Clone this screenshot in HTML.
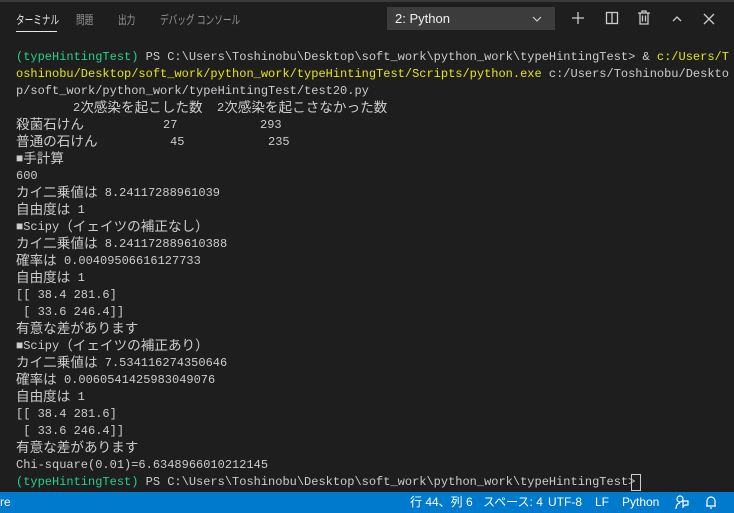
<!DOCTYPE html>
<html><head><meta charset="utf-8"><style>
body{margin:0;width:734px;height:513px;background:#1e1e1e;overflow:hidden;position:relative;font-family:"Liberation Mono","Noto Sans CJK JP",monospace;color:#cccccc}
.top{position:absolute;left:0;top:0;width:734px;height:2px;background:#3a3a3a}
.tab{position:absolute;top:11px;font:12px "Liberation Sans","Noto Sans CJK JP",sans-serif;color:#969696;transform:scaleX(0.72);transform-origin:0 0;white-space:nowrap}
.ul{position:absolute;left:16px;top:31px;width:41px;height:1px;background:#e7e7e7}
.dd{position:absolute;left:387px;top:7px;width:168px;height:23px;background:#3c3c3c;color:#f0f0f0;font:13px "Liberation Sans",sans-serif;line-height:23px;text-indent:8px}
.ln{position:absolute;left:16px;font-size:12px;line-height:17px;white-space:pre;height:17px}
.g{color:#23d18b}.y{color:#e5e510}
.j{font-family:"Noto Sans CJK JP",sans-serif;font-size:13.6px;letter-spacing:0;line-height:17px;display:inline-block;height:17px;vertical-align:top;overflow:visible;position:relative;top:-2px}
.sb{position:absolute;left:0;top:492px;width:734px;height:21px;background:#007acc;color:#fff;font:12px "Liberation Sans","Noto Sans CJK JP",sans-serif;line-height:21px}
.sb span{position:absolute;top:0;white-space:nowrap}
svg{position:absolute}
</style></head><body>
<div class="top"></div>
<div class="tab" style="left:16px;color:#e7e7e7">ターミナル</div>
<div class="tab" style="left:76px">問題</div>
<div class="tab" style="left:118px">出力</div>
<div class="tab" style="left:160px">デバッグ コンソール</div>
<div class="ul"></div>
<div class="dd">2: Python</div>
<svg style="left:530px;top:12px" width="14" height="14"><path d="M3 5l4 4 4-4" stroke="#ccc" fill="none" stroke-width="1.2"/></svg>
<svg style="left:571px;top:11px" width="14" height="14"><path d="M7 1v12M1 7h12" stroke="#ccc" stroke-width="1.3"/></svg>
<svg style="left:605px;top:11px" width="14" height="14"><rect x="1.5" y="1.5" width="11" height="11" stroke="#ccc" fill="none" stroke-width="1.3"/><path d="M7 1.5v11" stroke="#ccc" stroke-width="1.3"/></svg>
<svg style="left:637px;top:10px" width="14" height="15"><path d="M1 3h12M5 3V1h4v2M3 3v11h8V3M5.5 5.5v6M8.5 5.5v6" stroke="#ccc" fill="none" stroke-width="1.3"/></svg>
<svg style="left:670px;top:12px" width="14" height="14"><path d="M3 9l4-4 4 4" stroke="#ccc" fill="none" stroke-width="1.3"/></svg>
<svg style="left:702px;top:12px" width="14" height="14"><path d="M2 2l10 10M12 2L2 12" stroke="#ccc" stroke-width="1.3"/></svg>

<div class="ln" style="top:49px"><span class="g">(typeHintingTest)</span> PS C:\Users\Toshinobu\Desktop\soft_work\python_work\typeHintingTest&gt; &amp; <span class="y">c:/Users/T</span></div>
<div class="ln" style="top:66px"><span class="y">oshinobu/Desktop/soft_work/python_work/typeHintingTest/Scripts/python.exe</span> c:/Users/Toshinobu/Deskto</div>
<div class="ln" style="top:83px">p/soft_work/python_work/typeHintingTest/test20.py</div>
<div class="ln" style="top:100px;left:73px">2<span class="j">次感染を起こした数</span>  2<span class="j">次感染を起こさなかった数</span></div>
<div class="ln" style="top:117px"><span class="j">殺菌石けん</span></div><div class="ln" style="top:117px;left:163px">27</div><div class="ln" style="top:117px;left:260px">293</div>
<div class="ln" style="top:134px"><span class="j">普通の石けん</span></div><div class="ln" style="top:134px;left:170px">45</div><div class="ln" style="top:134px;left:268px">235</div>
<div class="ln" style="top:151px">■<span class="j">手計算</span></div>
<div class="ln" style="top:168px">600</div>
<div class="ln" style="top:185px"><span class="j">カイ二乗値は</span> 8.24117288961039</div>
<div class="ln" style="top:202px"><span class="j">自由度は</span> 1</div>
<div class="ln" style="top:219px">■Scipy<span class="j">（イェイツの補正なし）</span></div>
<div class="ln" style="top:236px"><span class="j">カイ二乗値は</span> 8.241172889610388</div>
<div class="ln" style="top:253px"><span class="j">確率は</span> 0.00409506616127733</div>
<div class="ln" style="top:270px"><span class="j">自由度は</span> 1</div>
<div class="ln" style="top:287px">[[ 38.4 281.6]</div>
<div class="ln" style="top:304px"> [ 33.6 246.4]]</div>
<div class="ln" style="top:321px"><span class="j">有意な差があります</span></div>
<div class="ln" style="top:338px">■Scipy<span class="j">（イェイツの補正あり）</span></div>
<div class="ln" style="top:355px"><span class="j">カイ二乗値は</span> 7.534116274350646</div>
<div class="ln" style="top:372px"><span class="j">確率は</span> 0.0060541425983049076</div>
<div class="ln" style="top:389px"><span class="j">自由度は</span> 1</div>
<div class="ln" style="top:406px">[[ 38.4 281.6]</div>
<div class="ln" style="top:423px"> [ 33.6 246.4]]</div>
<div class="ln" style="top:440px"><span class="j">有意な差があります</span></div>
<div class="ln" style="top:457px">Chi-square(0.01)=6.6348966010212145</div>
<div class="ln" style="top:474px"><span class="g">(typeHintingTest)</span> PS C:\Users\Toshinobu\Desktop\soft_work\python_work\typeHintingTest&gt; </div>
<div style="position:absolute;left:631px;top:474px;width:8px;height:15px;border:1px solid #ccc"></div>

<div class="sb">
<span style="left:0">re</span>
<span style="left:410px">行 44、列 6</span>
<span style="left:483px">スペース: 4</span>
<span style="left:548px">UTF-8</span>
<span style="left:595px">LF</span>
<span style="left:622px">Python</span>
</div>
<svg style="left:675px;top:495px" width="14" height="15"><circle cx="5" cy="4" r="3" stroke="#fff" fill="none" stroke-width="1.2"/><path d="M1 14c0-4 2-6 4-6M8 6h5v4h-3l-2 2z" stroke="#fff" fill="none" stroke-width="1.2"/></svg>
<svg style="left:705px;top:495px" width="12" height="15"><path d="M2 11V6a4 4 0 0 1 8 0v5zM1 11h10M5 13h2" stroke="#fff" fill="none" stroke-width="1.2"/></svg>
</body></html>
